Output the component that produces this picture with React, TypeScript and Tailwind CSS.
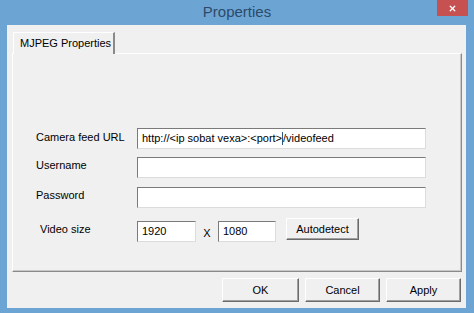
import { X } from "lucide-react";

const font = { fontFamily: '"Liberation Sans", Arial, sans-serif' };

const Field = ({ value, w, caret }: { value?: string; w: string; caret?: boolean }) => (
  <div
    className={`${w} h-[21px] bg-white border border-t-[#7a7a7a] border-l-[#7a7a7a] border-r-[#dcdcdc] border-b-[#dcdcdc] flex items-center px-[4px] text-[11px] text-black whitespace-nowrap overflow-hidden`}
  >
    {caret ? (
      <>
        <span>http://&lt;ip sobat vexa&gt;:&lt;port&gt;</span>
        <span className="w-px h-[13px] bg-[#2a5a8a]" />
        <span>/videofeed</span>
      </>
    ) : (
      value
    )}
  </div>
);

const Btn = ({ label, w, h }: { label: string; w: string; h: string }) => (
  <div
    className={`${w} ${h} flex items-center justify-center bg-[#f0f0f0] border border-t-white border-l-white border-r-[#6b6b6b] border-b-[#6b6b6b] shadow-[inset_-1px_-1px_0_#a0a0a0] text-[11px] text-black`}
  >
    {label}
  </div>
);

export default function App() {
  return (
    <div className="w-[474px] h-[313px] bg-[#6ca5d4] flex flex-col" style={font}>
      <div className="h-[25px] relative flex items-center justify-center">
        <span className="text-[15px] text-[#2d4a68] -mt-[1px]">Properties</span>
        <div className="absolute right-[6px] top-0 w-[31px] h-[16px] bg-[#c75050] flex items-center justify-center">
          <X className="w-[9px] h-[9px] text-white" strokeWidth={3.5} />
        </div>
      </div>
      <div className="flex-1 ml-[7px] mr-[8px] mb-[5px] bg-[#f0f0f0] flex flex-col pl-[5px] pr-[4px] pt-[7px]">
        <div className="flex">
          <div className="w-[102px] h-[22px] ml-[1px] border-t border-l border-white border-r-2 border-r-[#8a8a8a] flex items-center pl-[6px] text-[11px] text-black -mb-px z-10 bg-[#f0f0f0]">
            MJPEG Properties
          </div>
        </div>
        <div className="h-[219px] border border-t-white border-l-white border-r-[#8a8a8a] border-b-[#8a8a8a] shadow-[inset_-1px_-1px_0_#c8c8c8] flex flex-col pl-[23px] pt-[74px] text-[11px] text-black">
          <div className="flex items-start">
            <span className="w-[101px] pt-[1px]">Camera feed URL</span>
            <Field w="w-[289px]" caret />
          </div>
          <div className="flex items-start mt-[8px]">
            <span className="w-[101px]">Username</span>
            <Field w="w-[289px]" />
          </div>
          <div className="flex items-start mt-[9px]">
            <span className="w-[101px]">Password</span>
            <Field w="w-[289px]" />
          </div>
          <div className="flex items-center mt-[13px]">
            <span className="w-[101px] pl-[4px] -mt-[4px]">Video size</span>
            <Field w="w-[59px]" value="1920" />
            <span className="w-[22px] text-center pt-[4px]">X</span>
            <Field w="w-[58px]" value="1080" />
            <div className="ml-[10px] -mt-[5px]">
              <Btn label="Autodetect" w="w-[73px]" h="h-[22px]" />
            </div>
          </div>
        </div>
        <div className="flex justify-end gap-[6px] mt-[6px] pr-[1px]">
          <Btn label="OK" w="w-[77px]" h="h-[24px]" />
          <Btn label="Cancel" w="w-[75px]" h="h-[24px]" />
          <Btn label="Apply" w="w-[75px]" h="h-[24px]" />
        </div>
      </div>
    </div>
  );
}
